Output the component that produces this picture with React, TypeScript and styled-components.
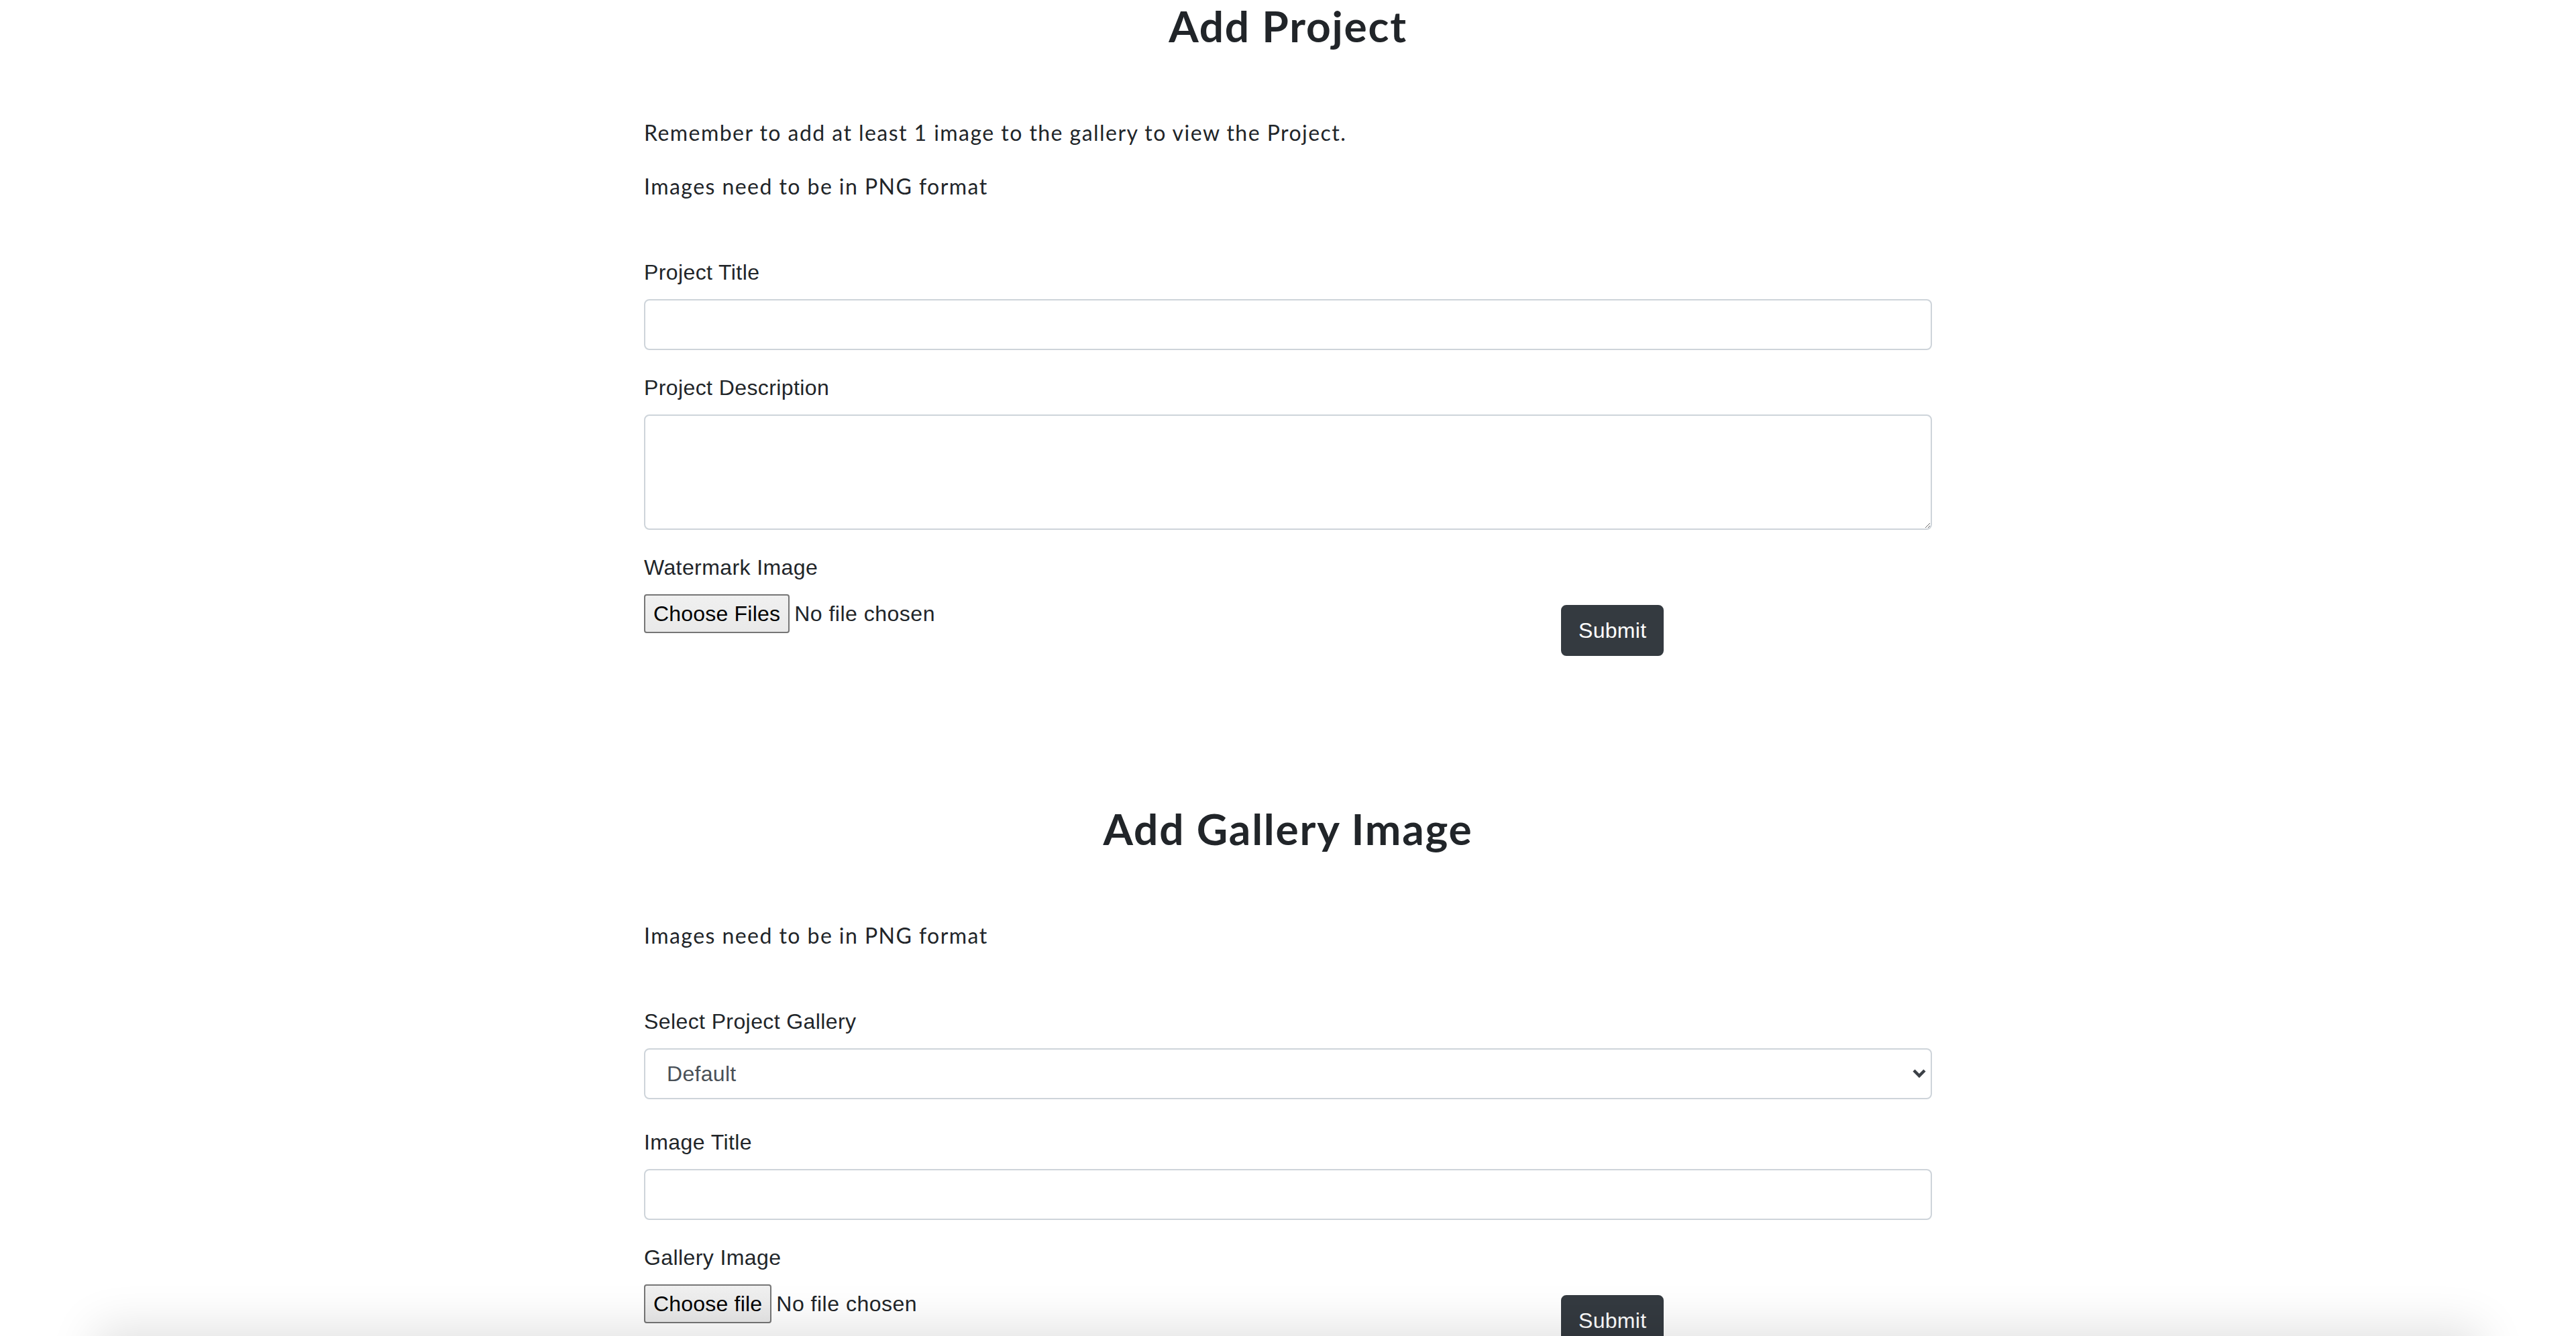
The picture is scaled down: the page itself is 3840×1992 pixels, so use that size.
import React from "react";
import styled, { createGlobalStyle } from "styled-components";

const GlobalStyle = createGlobalStyle`
  html, body { margin: 0; padding: 0; background: #ffffff; }
  body {
    font-family: Lato, "Noto Sans", sans-serif;
    color: #212529;
    -webkit-font-smoothing: antialiased;
  }
  * { box-sizing: border-box; }
`;

const Page = styled.main`
  width: 1920px;
  margin: 0 auto;
  display: flex;
  flex-direction: column;
`;

const Section = styled.section<{ $top: number }>`
  margin-top: ${(p) => p.$top}px;
  display: flex;
  flex-direction: column;
`;

const Title = styled.h2`
  margin: 0 0 97px;
  font-family: Lato, "Noto Sans", sans-serif;
  font-weight: 700;
  font-size: 64px;
  line-height: 77px;
  letter-spacing: 1.8px;
  text-align: center;
  color: #212529;
`;

const Note = styled.p`
  margin: 0 0 32px;
  font-size: 32px;
  line-height: 48px;
  letter-spacing: 1.45px;
  color: #212529;
`;

const Form = styled.form`
  margin-top: 48px;
  display: flex;
  flex-direction: column;
`;

const Group = styled.div<{ $gap?: number }>`
  margin-bottom: ${(p) => p.$gap ?? 32}px;
  display: flex;
  flex-direction: column;
`;

const Label = styled.label`
  display: block;
  margin-bottom: 16px;
  font-family: "Liberation Sans", Arial, sans-serif;
  font-size: 32px;
  line-height: 48px;
  letter-spacing: 0.4px;
  color: #212529;
`;

const TextInput = styled.input`
  width: 100%;
  height: 76px;
  padding: 12px 24px;
  border: 2px solid #ced4da;
  border-radius: 8px;
  background: #fff;
  font-family: "Liberation Sans", Arial, sans-serif;
  font-size: 32px;
  color: #495057;
  outline: none;
`;

const TextArea = styled.textarea`
  width: 100%;
  height: 172px;
  padding: 12px 24px;
  border: 2px solid #ced4da;
  border-radius: 8px;
  background: #fff;
  font-family: "Liberation Sans", Arial, sans-serif;
  font-size: 32px;
  line-height: 48px;
  color: #495057;
  resize: vertical;
  outline: none;
`;

const SelectWrap = styled.div`
  position: relative;
  width: 100%;
`;

const Select = styled.select`
  width: 100%;
  height: 76px;
  padding: 0 48px 0 32px;
  border: 2px solid #ced4da;
  border-radius: 8px;
  background: #fff;
  appearance: none;
  -webkit-appearance: none;
  font-family: "Liberation Sans", Arial, sans-serif;
  font-size: 32px;
  letter-spacing: 0.3px;
  color: #495057;
  outline: none;
`;

const Chevron = styled.svg`
  position: absolute;
  right: 9px;
  top: 50%;
  width: 20px;
  height: 14px;
  margin-top: -7px;
  pointer-events: none;
`;

const FileRow = styled.div`
  display: flex;
  align-items: flex-start;
`;

const FileField = styled.div`
  width: 1367px;
  display: flex;
  align-items: center;
  gap: 7px;
`;

const FileButton = styled.button`
  height: 58px;
  padding: 0 12px;
  background: linear-gradient(#f0f0f0, #e9e9e9);
  border: 2px solid #767676;
  border-radius: 4px;
  font-family: "Liberation Sans", Arial, sans-serif;
  font-size: 32px;
  letter-spacing: 0.2px;
  color: #000;
`;

const FileName = styled.span`
  font-family: "Liberation Sans", Arial, sans-serif;
  font-size: 32px;
  letter-spacing: 0.5px;
  color: #212529;
`;

const SubmitButton = styled.button`
  margin-top: 16px;
  height: 76px;
  padding: 0 24px;
  background: #343a40;
  border: 2px solid #343a40;
  border-radius: 8px;
  color: #fff;
  font-family: "Liberation Sans", Arial, sans-serif;
  font-size: 32px;
  line-height: 48px;
  letter-spacing: 0.3px;
`;

const FooterShadow = styled.div`
  position: fixed;
  left: 4%;
  right: 4%;
  bottom: -120px;
  height: 120px;
  background: #fff;
  box-shadow: 0 0 70px 12px rgba(0, 0, 0, 0.12);
  pointer-events: none;
`;

export default function App() {
  return (
    <>
      <GlobalStyle />
      <Page>
        <Section $top={0}>
          <Title>Add Project</Title>
          <Note>Remember to add at least 1 image to the gallery to view the Project.</Note>
          <Note>Images need to be in PNG format</Note>
          <Form onSubmit={(e) => e.preventDefault()}>
            <Group>
              <Label>Project Title</Label>
              <TextInput type="text" />
            </Group>
            <Group>
              <Label>Project Description</Label>
              <TextArea rows={3} />
            </Group>
            <Group $gap={0}>
              <Label>Watermark Image</Label>
              <FileRow>
                <FileField>
                  <FileButton type="button">Choose Files</FileButton>
                  <FileName>No file chosen</FileName>
                </FileField>
                <SubmitButton type="submit">Submit</SubmitButton>
              </FileRow>
            </Group>
          </Form>
        </Section>
        <Section $top={219}>
          <Title>Add Gallery Image</Title>
          <Note>Images need to be in PNG format</Note>
          <Form onSubmit={(e) => e.preventDefault()}>
            <Group $gap={40}>
              <Label>Select Project Gallery</Label>
              <SelectWrap>
                <Select defaultValue="Default">
                  <option>Default</option>
                </Select>
                <Chevron viewBox="0 0 20 14">
                  <path d="M2 2 L10 10 L18 2" fill="none" stroke="#3b4046" strokeWidth="4.5" />
                </Chevron>
              </SelectWrap>
            </Group>
            <Group>
              <Label>Image Title</Label>
              <TextInput type="text" />
            </Group>
            <Group $gap={0}>
              <Label>Gallery Image</Label>
              <FileRow>
                <FileField>
                  <FileButton type="button">Choose file</FileButton>
                  <FileName>No file chosen</FileName>
                </FileField>
                <SubmitButton type="submit">Submit</SubmitButton>
              </FileRow>
            </Group>
          </Form>
        </Section>
      </Page>
      <FooterShadow />
    </>
  );
}
